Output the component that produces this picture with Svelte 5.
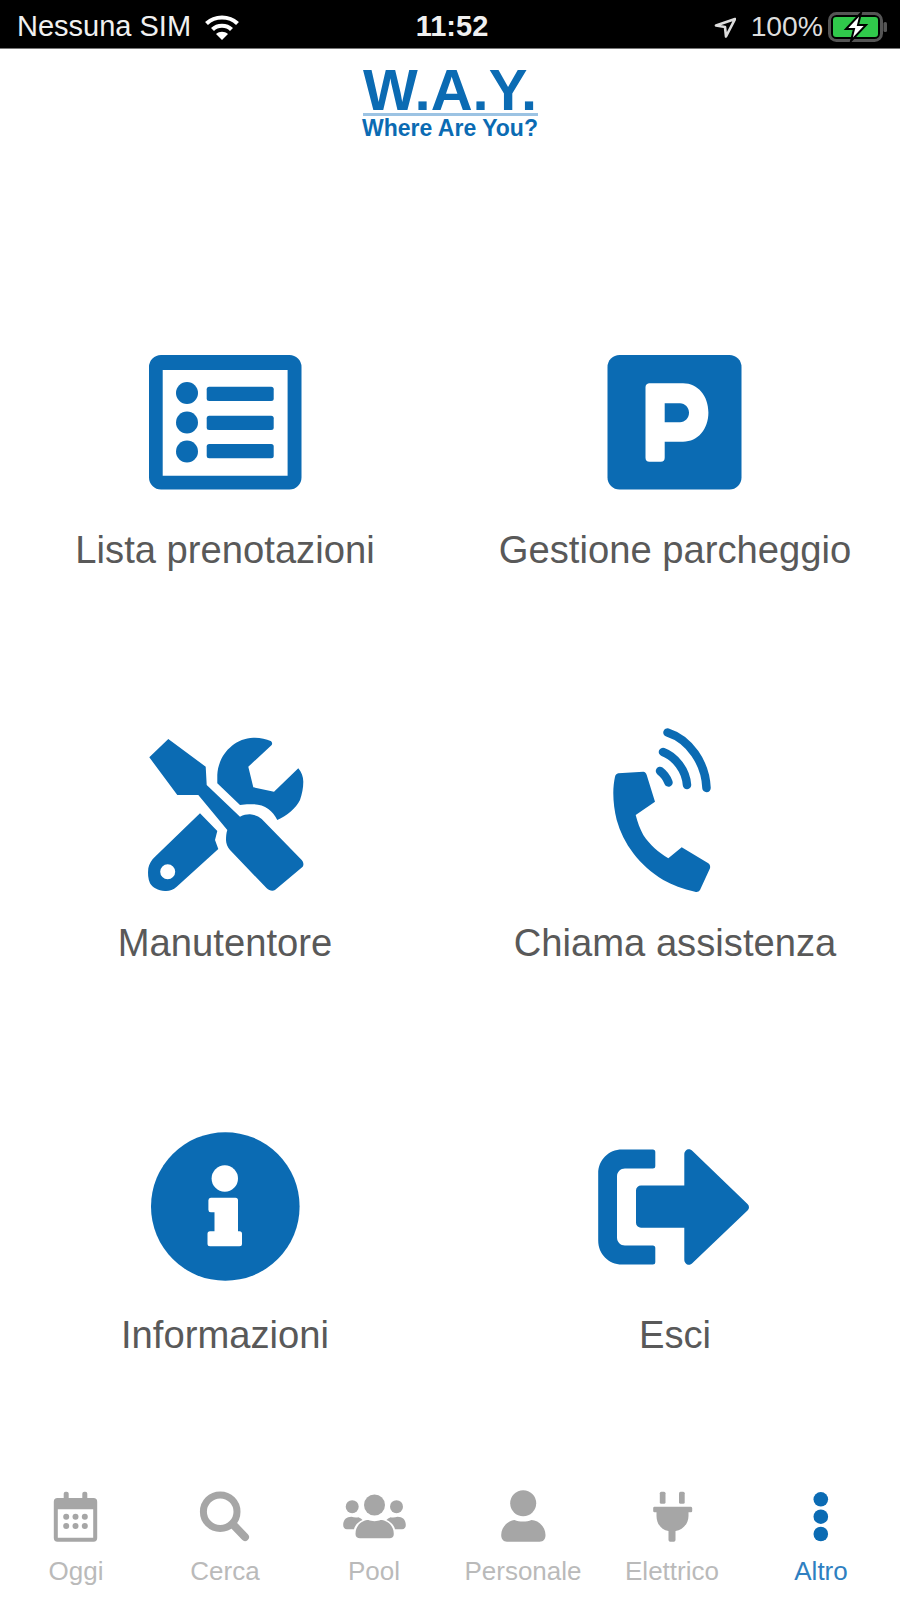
<script>
  const blue = '#0b6bb3';
</script>

<div class="page">
  <div class="status">
    <div class="status-left">
      <span>Nessuna SIM</span>
      <svg class="wifi" width="36" height="28" viewBox="0 0 36 28">
        <path d="M2.5 10.5C11 2.5 25 2.5 33.5 10.5" class="wave" />
        <path d="M8.5 16.5C13.5 11.5 22.5 11.5 27.5 16.5" class="wave" />
        <path d="M18 27L12 21C15.5 18 20.5 18 24 21Z" fill="#fff" />
      </svg>
    </div>
    <div class="time">11:52</div>
    <div class="status-right">
      <svg class="arrow" width="22" height="24" viewBox="0 0 22 24">
        <path d="M21 4L2 10.5L11 12L12 21.5Z" fill="none" stroke="#ddd" stroke-width="2.6" stroke-linejoin="round" />
      </svg>
      <span class="percent">100%</span>
      <svg width="59" height="30" viewBox="0 0 59 30">
        <rect x="1.5" y="1.5" width="52" height="27" rx="7" fill="none" stroke="#555" stroke-width="3" />
        <rect x="5" y="5" width="45" height="20" rx="3" fill="#30c94b" />
        <rect x="55.5" y="10" width="3.5" height="10" rx="1.5" fill="#555" />
        <path d="M33 1L18 17H26L23 29L38 13H30Z" fill="#fff" stroke="#000" stroke-width="2" />
      </svg>
    </div>
  </div>

  <div class="logo">
    <div class="logo-name">W.A.Y.</div>
    <div class="logo-line"></div>
    <div class="logo-sub">Where Are You?</div>
  </div>

  <div class="menu">
    <div class="item">
      <svg width="200" height="180" viewBox="125 330 200 180">
        <path fill-rule="evenodd" fill={blue} d="M161 355H289.5A12 12 0 0 1 301.5 367V477.5A12 12 0 0 1 289.5 489.5H161A12 12 0 0 1 149 477.5V367A12 12 0 0 1 161 355ZM162.7 370V475.7H287.6V370Z" />
        <circle cx="187" cy="393" r="11" fill={blue} />
        <circle cx="187" cy="422.5" r="11" fill={blue} />
        <circle cx="187" cy="451.5" r="11" fill={blue} />
        <rect x="206.7" y="386.7" width="67" height="14.3" rx="2.5" fill={blue} />
        <rect x="206.7" y="415.7" width="67" height="14.3" rx="2.5" fill={blue} />
        <rect x="206.7" y="444" width="67" height="14.3" rx="2.5" fill={blue} />
      </svg>
      <div class="label">Lista prenotazioni</div>
    </div>

    <div class="item">
      <svg width="200" height="180" viewBox="575 330 200 180">
        <rect x="607.5" y="355" width="134" height="134.5" rx="12" fill={blue} />
        <path fill-rule="evenodd" fill="#fff" d="M649 383.3H683C698 383.3 708.4 396 708.4 412.5C708.4 429 698 441.7 683 441.7H664.7V457.7A4 4 0 0 1 660.7 461.7H649.5A4 4 0 0 1 645.5 457.7V387A4 4 0 0 1 649 383.3ZM664.7 403.3V422.3H680C685 422.3 689 418 689 412.8C689 407.6 685 403.3 680 403.3Z" />
      </svg>
      <div class="label">Gestione parcheggio</div>
    </div>

    <div class="item">
      <svg width="200" height="180" viewBox="125 723 200 180">
        <path fill={blue} d="M168.3 739L205.7 766.7L206.7 785L240 816.7C243.5 815 247 814.2 250 814.3C254 814.5 258.5 816 261.7 819L301.7 860C303.5 862 304 865 302.7 866.7L275 890C272.5 891.5 269 890.5 266.7 888.3L230 850C227.5 847 226 843.5 226 840C226 836.5 226.3 833 227.3 830L198.3 795H177.3L149.3 757.3Z" />
        <path fill={blue} d="M270.7 741C272.2 742 272.5 743.8 271.7 745L248.3 766.7L253.3 787.3L274 791.7L298.3 768.3C301.5 772 303.3 777 303.3 781.7C303.3 788 302 794 300 800C296 808 287 816 277.3 820C275 815.5 272 811.5 268.3 809C264 806 259 804.5 253.3 804.3C249 804 244 804.2 240 805L217.3 783.3V775C218 756 233 738.5 253.3 737.7C259.5 737.4 266 738.8 270.7 741Z" />
        <path fill-rule="evenodd" fill={blue} d="M200 813.3L217.3 831L215 840L218.3 849L176.7 886.7C173 890 169 891.3 165 891C158 890.7 152.5 887.5 150 883.3C148 879 147.7 873.5 148.3 868.3C149 864 151.5 860 155 856.7ZM167.7 864.2A7.5 7.5 0 1 0 167.7 879.2A7.5 7.5 0 1 0 167.7 864.2Z" />
      </svg>
      <div class="label">Manutentore</div>
    </div>

    <div class="item">
      <svg width="200" height="180" viewBox="575 723 200 180">
        <path fill={blue} d="M615 776.7C615.3 775 616.5 773.6 618.3 773.3L643.3 771.7C645 771.7 646.2 773 646.7 775L655 801.7L635.7 815C637.5 822 640 829 643.3 835C650 845 658.5 852.5 668.3 858.3L681.7 847.3L708.3 863.3C710 864.5 710.5 866.5 710 868.3L700 890C699 891.7 697 892.2 695 891.7C683 889 672 885 663.3 880C651.5 873 641.5 864 633.3 853.3C625.5 843 620 832 616.7 820C614.5 811 613.3 802 613.3 793.3C613.3 787 614 781.5 615 776.7Z" />
        <path class="sig" d="M660 771C664 774 667 778.5 668.5 782.5" />
        <path class="sig" d="M663 752C675.5 756.5 686 770.5 687 785" />
        <path class="sig" d="M667.5 732.5C689.5 739.5 705.5 763 706.5 788" />
      </svg>
      <div class="label">Chiama assistenza</div>
    </div>

    <div class="item">
      <svg width="200" height="180" viewBox="125 1115.5 200 180">
        <circle cx="225.3" cy="1207" r="74.3" fill={blue} />
        <circle cx="224.8" cy="1179" r="13.2" fill="#fff" />
        <path fill="#fff" d="M211 1198.3H235.5A2.5 2.5 0 0 1 238 1200.8V1231.7H239.5A2.5 2.5 0 0 1 242 1234.2V1244.2A2.5 2.5 0 0 1 239.5 1246.7H210A2.5 2.5 0 0 1 207.5 1244.2V1234.2A2.5 2.5 0 0 1 210 1231.7H214.5V1212.7H211A2.5 2.5 0 0 1 208.4 1210.2V1200.8A2.5 2.5 0 0 1 211 1198.3Z" />
      </svg>
      <div class="label">Informazioni</div>
    </div>

    <div class="item">
      <svg width="200" height="180" viewBox="575 1115.5 200 180">
        <path fill={blue} d="M622 1150H652.8A2.5 2.5 0 0 1 655.3 1152.5V1166.5A2.5 2.5 0 0 1 652.8 1169H625C620.5 1169 617 1172.5 617 1177V1238C617 1242.5 620.5 1246 625 1246H652.8A2.5 2.5 0 0 1 655.3 1248.5V1262.5A2.5 2.5 0 0 1 652.8 1265H622C608.5 1265 598.2 1254.5 598.2 1241V1174C598.2 1160.5 608.5 1150 622 1150Z" />
        <path fill={blue} d="M684.3 1155C684.3 1150 689.5 1148 692.5 1151.5L747.5 1204.5C749.5 1206.5 749.5 1209 747.5 1211L692.5 1263.5C689.5 1267 684.3 1265 684.3 1260V1228.3H641A5 5 0 0 1 636 1223.3V1191A5 5 0 0 1 641 1186H684.3Z" />
      </svg>
      <div class="label">Esci</div>
    </div>
  </div>

  <div class="tabs">
    <div class="tab">
      <svg width="149" height="60" viewBox="1.5 1485 149 60">
        <rect x="63.2" y="1491.7" width="5" height="10" rx="2" fill="#a6a6a6" />
        <rect x="81.8" y="1491.7" width="5" height="10" rx="2" fill="#a6a6a6" />
        <path fill-rule="evenodd" fill="#a6a6a6" d="M57 1498H93A3.7 3.7 0 0 1 96.7 1501.7V1538A3.7 3.7 0 0 1 93 1541.7H57A3.7 3.7 0 0 1 53.3 1538V1501.7A3.7 3.7 0 0 1 57 1498ZM57.3 1509.3V1537.7H92.7V1509.3Z" />
        {#each [65.7, 75, 84.3] as x}
          <circle cx={x} cy="1516.7" r="3" fill="#a6a6a6" />
          <circle cx={x} cy="1526" r="3" fill="#a6a6a6" />
        {/each}
      </svg>
      <span>Oggi</span>
    </div>
    <div class="tab">
      <svg width="149" height="60" viewBox="150.5 1485 149 60">
        <circle cx="219.7" cy="1511.7" r="16.8" fill="none" stroke="#a6a6a6" stroke-width="7" />
        <path d="M233 1525L244.5 1537" stroke="#a6a6a6" stroke-width="8" stroke-linecap="round" />
      </svg>
      <span>Cerca</span>
    </div>
    <div class="tab">
      <svg width="149" height="60" viewBox="299.5 1485 149 60">
        <circle cx="374" cy="1505" r="10.5" fill="#a6a6a6" />
        <circle cx="351.7" cy="1506.7" r="6.5" fill="#a6a6a6" />
        <circle cx="396" cy="1506.7" r="6.5" fill="#a6a6a6" />
        <path fill="#a6a6a6" d="M355 1534C355 1524 363 1520 368 1520C371 1521.5 377 1521.5 380 1520C385 1520 393.3 1524 393.3 1534C393.3 1537 391.5 1538.3 389 1538.3H359.5C357 1538.3 355 1537 355 1534Z" />
        <path fill="#a6a6a6" d="M342.7 1525C342.7 1519.5 346 1516.7 351 1516.7C353 1517.5 356 1517.7 358 1517.2C360 1518 361 1519 362 1520C358 1521.5 354.5 1525 353.5 1529.3H346.5C344 1529.3 342.7 1527.5 342.7 1525Z" />
        <path fill="#a6a6a6" d="M405.3 1525C405.3 1519.5 402 1516.7 397 1516.7C395 1517.5 392 1517.7 390 1517.2C388 1518 387 1519 386 1520C390 1521.5 393.5 1525 394.5 1529.3H401.5C404 1529.3 405.3 1527.5 405.3 1525Z" />
      </svg>
      <span>Pool</span>
    </div>
    <div class="tab">
      <svg width="149" height="60" viewBox="448.5 1485 149 60">
        <circle cx="522.7" cy="1503.3" r="13" fill="#a6a6a6" />
        <path fill="#a6a6a6" d="M500.7 1535C500.7 1526 509 1520 514 1520C519 1522 526 1522 531 1520C537 1520 545 1526 545 1535C545 1539 543 1541.7 539 1541.7H506.5C503 1541.7 500.7 1539 500.7 1535Z" />
      </svg>
      <span>Personale</span>
    </div>
    <div class="tab">
      <svg width="149" height="60" viewBox="597.5 1485 149 60">
        <rect x="659.3" y="1491.7" width="5.7" height="12" rx="1.5" fill="#a6a6a6" />
        <rect x="678.5" y="1491.7" width="5.7" height="12" rx="1.5" fill="#a6a6a6" />
        <path fill="#a6a6a6" d="M654 1506.7H690.5A1.4 1.4 0 0 1 691.7 1508V1511A1.4 1.4 0 0 1 690.5 1512.3H688V1516C688 1524 682 1530 675 1531V1540A1.7 1.7 0 0 1 673.3 1541.7H669.7A1.7 1.7 0 0 1 668 1540V1531C661 1530 656 1524 656 1516V1512.3H654A1.4 1.4 0 0 1 652.7 1511V1508A1.4 1.4 0 0 1 654 1506.7Z" />
      </svg>
      <span>Elettrico</span>
    </div>
    <div class="tab active">
      <svg width="149" height="60" viewBox="746.5 1485 149 60">
        <circle cx="820.3" cy="1499.3" r="7.3" fill={blue} />
        <circle cx="820.3" cy="1516.7" r="7.3" fill={blue} />
        <circle cx="820.3" cy="1534" r="7.3" fill={blue} />
      </svg>
      <span>Altro</span>
    </div>
  </div>
</div>

<style>
  :global(body) {
    margin: 0;
    background: #fff;
  }

  .page {
    width: 900px;
    height: 1598px;
    display: flex;
    flex-direction: column;
    font-family: "Liberation Sans", Arial, sans-serif;
    overflow: hidden;
  }

  .status {
    height: 49px;
    flex: none;
    background: #000;
    color: #f0f0f0;
    font-size: 29px;
    display: grid;
    grid-template-columns: 1fr auto 1fr;
    align-items: center;
    padding: 5px 13px 0 17px;
    box-sizing: border-box;
    border-bottom: 1px solid #777;
  }

  .status-left {
    display: flex;
    align-items: center;
    gap: 13px;
  }

  .wave {
    fill: none;
    stroke: #fff;
    stroke-width: 4.2;
  }

  .time {
    font-weight: 700;
    font-size: 29px;
  }

  .status-right {
    display: flex;
    align-items: center;
    justify-content: flex-end;
    font-size: 28.3px;
    color: #ddd;
  }

  .arrow {
    margin-right: 15px;
  }

  .percent {
    margin-right: 5px;
  }

  .logo {
    height: 281px;
    flex: none;
    display: flex;
    flex-direction: column;
    align-items: center;
    color: #0b6bb3;
    padding-top: 19px;
    box-sizing: border-box;
  }

  .logo-name {
    font-size: 58px;
    font-weight: 700;
    line-height: 44px;
  }

  .logo-line {
    width: 175px;
    height: 3px;
    margin-top: 1px;
    background: #9cc3e3;
  }

  .logo-sub {
    font-size: 23px;
    font-weight: 700;
    line-height: 22px;
    margin-top: 1px;
    white-space: nowrap;
  }

  .menu {
    display: grid;
    grid-template-columns: 450px 450px;
    row-gap: 132.5px;
  }

  .item {
    display: flex;
    flex-direction: column;
    align-items: center;
  }

  .item svg {
    display: block;
  }

  .sig {
    fill: none;
    stroke: #0b6bb3;
    stroke-width: 8.5;
    stroke-linecap: round;
  }

  .label {
    height: 80px;
    line-height: 80px;
    font-size: 38.2px;
    color: #595959;
    white-space: nowrap;
  }

  .tabs {
    margin-top: auto;
    display: grid;
    grid-template-columns: repeat(6, 149px);
    padding: 5px 4.5px 0 1.5px;
  }

  .tab {
    display: flex;
    flex-direction: column;
    align-items: center;
    color: #bababa;
    font-size: 26px;
    line-height: 53px;
  }

  .tab svg {
    display: block;
  }

  .tab.active {
    color: #2f7fc1;
  }
</style>
